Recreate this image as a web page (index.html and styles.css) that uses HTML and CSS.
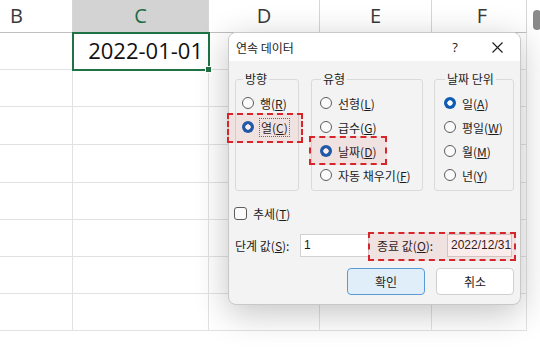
FILE: index.html
```html
<!DOCTYPE html>
<html>
<head>
  <meta charset="UTF-8">
  <title>연속 데이터</title>
  <link rel="stylesheet" href="styles.css">
</head>
<body>
  <div class="app">
    <div class="grid">
      <div class="row head">
        <div class="cell colB">B</div>
        <div class="cell colC active">C</div>
        <div class="cell colD">D</div>
        <div class="cell colE">E</div>
        <div class="cell colF">F</div>
      </div>
      <div class="row">
        <div class="cell colB"></div>
        <div class="cell colC sel">2022-01-01<span class="handle"></span></div>
        <div class="cell colD"></div>
        <div class="cell colE"></div>
        <div class="cell colF"></div>
      </div>
      <div class="row">
        <div class="cell colB"></div><div class="cell colC"></div><div class="cell colD"></div><div class="cell colE"></div><div class="cell colF"></div>
      </div>
      <div class="row tall">
        <div class="cell colB"></div><div class="cell colC"></div><div class="cell colD"></div><div class="cell colE"></div><div class="cell colF"></div>
      </div>
      <div class="row tall">
        <div class="cell colB"></div><div class="cell colC"></div><div class="cell colD"></div><div class="cell colE"></div><div class="cell colF"></div>
      </div>
      <div class="row">
        <div class="cell colB"></div><div class="cell colC"></div><div class="cell colD"></div><div class="cell colE"></div><div class="cell colF"></div>
      </div>
      <div class="row">
        <div class="cell colB"></div><div class="cell colC"></div><div class="cell colD"></div><div class="cell colE"></div><div class="cell colF"></div>
      </div>
      <div class="row">
        <div class="cell colB"></div><div class="cell colC"></div><div class="cell colD"></div><div class="cell colE"></div><div class="cell colF"></div>
      </div>
      <div class="row">
        <div class="cell colB"></div><div class="cell colC"></div><div class="cell colD"></div><div class="cell colE"></div><div class="cell colF"></div>
      </div>
    </div>
    <div class="vscroll"><div class="thumb"></div></div>

    <div class="dialog">
      <div class="titlebar">
        <span class="title">연속 데이터</span>
        <span class="help">?</span>
        <span class="close">
          <svg width="11" height="11" viewBox="0 0 11 11"><path d="M0.5 0.5 L10.5 10.5 M10.5 0.5 L0.5 10.5" stroke="#1b1b1b" stroke-width="1.1" fill="none"/></svg>
        </span>
      </div>
      <div class="dlg-body">
        <div class="groups">
          <fieldset class="grp grp-dir">
            <legend>방향</legend>
            <div class="opt"><span class="radio"></span><span>행(<u>R</u>)</span></div>
            <div class="opt"><span class="radio on"></span><span class="focus">열(<u>C</u>)</span></div>
          </fieldset>
          <fieldset class="grp grp-type">
            <legend>유형</legend>
            <div class="opt"><span class="radio"></span><span>선형(<u>L</u>)</span></div>
            <div class="opt"><span class="radio"></span><span>급수(<u>G</u>)</span></div>
            <div class="opt"><span class="radio on"></span><span>날짜(<u>D</u>)</span></div>
            <div class="opt"><span class="radio"></span><span>자동 채우기(<u>F</u>)</span></div>
          </fieldset>
          <fieldset class="grp grp-unit">
            <legend>날짜 단위</legend>
            <div class="opt"><span class="radio on"></span><span>일(<u>A</u>)</span></div>
            <div class="opt"><span class="radio"></span><span>평일(<u>W</u>)</span></div>
            <div class="opt"><span class="radio"></span><span>월(<u>M</u>)</span></div>
            <div class="opt"><span class="radio"></span><span>년(<u>Y</u>)</span></div>
          </fieldset>
        </div>
        <div class="opt check"><span class="box"></span><span>추세(<u>T</u>)</span></div>
        <div class="values">
          <span class="lbl lbl-step">단계 값(<u>S</u>):</span>
          <span class="field field-step">1</span>
          <span class="lbl lbl-end">종료 값(<u>O</u>):</span>
          <span class="field field-end">2022/12/31</span>
        </div>
        <div class="buttons">
          <button class="btn primary">확인</button>
          <button class="btn">취소</button>
        </div>
      </div>
      <!-- red dashed callouts -->
      <div class="mark mark-col"></div>
      <div class="mark mark-date"></div>
      <div class="mark mark-end"></div>
    </div>
  </div>
</body>
</html>
```

FILE: styles.css
```css
body {
  margin: 0;
  font-family: "Noto Sans CJK KR", "Noto Sans", sans-serif;
  color: #1b1b1b;
}
.app {
  position: relative;
  display: flex;
  width: 540px;
  height: 356px;
  overflow: hidden;
  background: #ffffff;
}
.grid {
  flex: 1;
  margin-left: -39px;
}
.row {
  display: flex;
  height: 37px;
}
.row.tall {
  height: 38px;
}
.row.head {
  height: 33px;
}
.cell {
  box-sizing: border-box;
  border-right: 1px solid #e2e2e2;
  border-bottom: 1px solid #e2e2e2;
}
.head .cell {
  border-right-color: #d6d6d6;
  border-bottom-color: #bfbfbf;
  font-family: "Open Sans", sans-serif;
  font-size: 20px;
  line-height: 31px;
  text-align: center;
  color: #3a3a3a;
}
.head .cell.active {
  background: #d3d3d3;
  color: #1e6b45;
}
.colB { width: 112px; }
.colC { width: 136px; }
.colD { width: 111px; }
.colE { width: 112px; }
.colF { flex: 1; }
.head .colF {
  padding-left: 6px;
}
.cell.sel {
  position: relative;
  outline: 2px solid #1f7244;
  outline-offset: -1px;
  font-family: "Open Sans", sans-serif;
  font-size: 22px;
  line-height: 35px;
  text-align: right;
  padding-right: 5px;
  color: #111111;
}
.handle {
  position: absolute;
  right: -4px;
  bottom: -4px;
  width: 5px;
  height: 5px;
  background: #1f7244;
  border: 1px solid #ffffff;
}
.vscroll {
  width: 13px;
  background: #ffffff;
}
.thumb {
  margin: 10px 0 0 6px;
  width: 8px;
  height: 20px;
  border-radius: 4px;
  background: #8a8a8a;
}

/* dialog */
.dialog {
  position: absolute;
  left: 228px;
  top: 32px;
  width: 293px;
  height: 273px;
  box-sizing: border-box;
  background: #f3f3f3;
  border: 1px solid #c8c8c8;
  border-radius: 8px;
  box-shadow: 0 8px 34px rgba(0, 0, 0, 0.24);
  font-size: 12px;
}
.titlebar {
  display: flex;
  align-items: center;
  height: 28px;
  padding-left: 7px;
  background: #ffffff;
  border-radius: 7px 7px 0 0;
}
.title {
  font-size: 12px;
}
.help {
  margin-left: auto;
  margin-right: 4px;
  width: 30px;
  text-align: center;
  font-family: "Open Sans", sans-serif;
  font-size: 13px;
}
.close {
  width: 46px;
  display: flex;
  justify-content: center;
}
.dlg-body {
  padding: 10px 6px 8px 6px;
}
.groups {
  display: flex;
}
.grp {
  box-sizing: border-box;
  height: 120px;
  margin: 0;
  padding: 4px 0 0 6px;
  border: 1px solid #dadada;
  border-radius: 3px;
  min-width: 0;
}
.grp legend {
  padding: 0 2px;
  margin-left: 1px;
  font-size: 12px;
  line-height: 16px;
}
.grp-dir { width: 64px; margin-right: 12px; }
.grp-type { width: 112px; margin-right: 11px; padding-left: 8px; }
.grp-unit { width: 80px; padding-left: 9px; }
.opt {
  display: flex;
  align-items: center;
  height: 24px;
  gap: 6px;
  font-size: 12px;
  white-space: nowrap;
}
.opt u,
.lbl u {
  text-underline-offset: 1px;
}
.radio {
  box-sizing: border-box;
  width: 12px;
  height: 12px;
  border-radius: 50%;
  border: 1px solid #5c5c5c;
  background: #fbfbfb;
  flex: none;
}
.radio.on {
  border: none;
  background: radial-gradient(circle, #ffffff 0 2.4px, #0f5cb4 3px);
}
.focus {
  outline: 1px dotted #6a6a6a;
  padding: 0 1px;
}
.check {
  margin-top: 12px;
  height: 20px;
}
.box {
  box-sizing: border-box;
  width: 13px;
  height: 13px;
  margin-left: -1px;
  border: 1px solid #5c5c5c;
  border-radius: 3px;
  background: #fbfbfb;
}
.values {
  display: flex;
  align-items: center;
  margin-top: 11px;
  height: 23px;
}
.lbl-step { width: 65px; }
.lbl-end { width: 70px; margin-left: 8px; }
.field {
  box-sizing: border-box;
  height: 23px;
  line-height: 21px;
  padding-left: 3px;
  background: #ffffff;
  border: 1px solid #d2d2d2;
  font-family: "Liberation Sans", sans-serif;
  font-size: 12px;
  white-space: nowrap;
}
.field-step { width: 69px; }
.field-end { width: 65px; }
.buttons {
  display: flex;
  justify-content: flex-end;
  gap: 11px;
  margin-top: 11px;
}
.btn {
  width: 78px;
  height: 27px;
  font-family: "Noto Sans CJK KR", sans-serif;
  font-size: 12px;
  color: #1b1b1b;
  background: #ffffff;
  border: 1px solid #d0d0d0;
  border-radius: 4px;
}
.btn.primary {
  background: #e0eefa;
  border-color: #5b9bd5;
}
.mark {
  position: absolute;
  box-sizing: border-box;
  border: 2px dashed #d7262b;
  background: rgba(225, 50, 50, 0.09);
  pointer-events: none;
}
.mark-col { left: -2px; top: 80px; width: 76px; height: 30px; }
.mark-date { left: 80px; top: 103px; width: 78px; height: 29px; }
.mark-end { left: 139px; top: 199px; width: 148px; height: 29px; }
```
